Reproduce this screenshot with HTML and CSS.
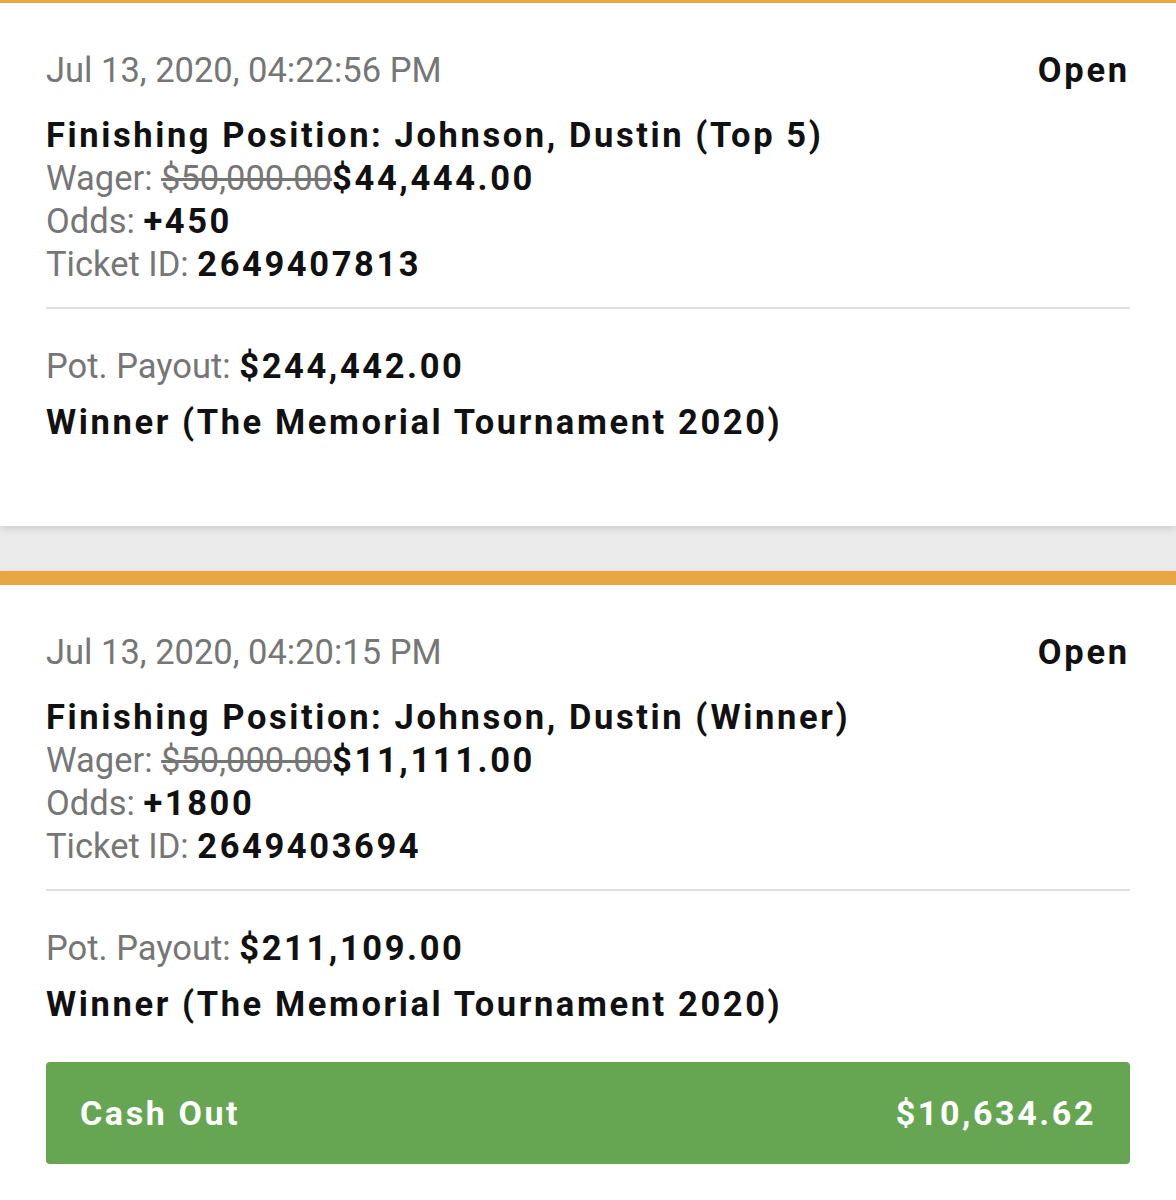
FILE: index.html
```html
<!DOCTYPE html>
<html lang="en">
<head>
    <meta charset="UTF-8">
    <meta name="viewport" content="width=device-width, initial-scale=1.0">
    <title>My Bets</title>
    <link rel="stylesheet" href="styles.css">
</head>
<body>
    <div class="feed">
        <div class="bet">
            <div class="bet-head">
                <span class="date">Jul 13, 2020, 04:22:56 PM</span>
                <span class="status">Open</span>
            </div>
            <div class="details">
                <div class="market">Finishing Position: Johnson, Dustin (Top 5)</div>
                <div class="row"><span class="label">Wager: </span><s class="old">$50,000.00</s><span class="value">$44,444.00</span></div>
                <div class="row"><span class="label">Odds: </span><span class="value">+450</span></div>
                <div class="row"><span class="label">Ticket ID: </span><span class="value">2649407813</span></div>
            </div>
            <div class="payout">
                <div class="row"><span class="label">Pot. Payout: </span><span class="value">$244,442.00</span></div>
                <div class="event">Winner (The Memorial Tournament 2020)</div>
            </div>
        </div>

        <div class="bet">
            <div class="bet-head">
                <span class="date">Jul 13, 2020, 04:20:15 PM</span>
                <span class="status">Open</span>
            </div>
            <div class="details">
                <div class="market">Finishing Position: Johnson, Dustin (Winner)</div>
                <div class="row"><span class="label">Wager: </span><s class="old">$50,000.00</s><span class="value">$11,111.00</span></div>
                <div class="row"><span class="label">Odds: </span><span class="value">+1800</span></div>
                <div class="row"><span class="label">Ticket ID: </span><span class="value">2649403694</span></div>
            </div>
            <div class="payout">
                <div class="row"><span class="label">Pot. Payout: </span><span class="value">$211,109.00</span></div>
                <div class="event">Winner (The Memorial Tournament 2020)</div>
            </div>
            <button class="cashout" type="button">
                <span>Cash Out</span>
                <span>$10,634.62</span>
            </button>
        </div>
    </div>
</body>
</html>
```

FILE: styles.css
```css
body {
    margin: 0;
    background-color: #ebebeb;
    font-family: Roboto, "Liberation Sans", sans-serif;
    font-size: 34.5px;
    line-height: 43px;
    color: #111;
}
.feed {
    margin-top: -11px;
}
.bet {
    background-color: #fff;
    border-top: 14px solid #e9a743;
    padding: 46px 46px 46px;
    margin-bottom: 45px;
    box-shadow: 0 3px 8px rgba(0, 0, 0, 0.12);
}
.bet-head {
    display: flex;
    justify-content: space-between;
    align-items: baseline;
}
.date {
    color: #767676;
}
.status {
    font-weight: 700;
    letter-spacing: 2.8px;
}
.details {
    margin-top: 22px;
    padding-bottom: 21px;
    border-bottom: 2px solid #dedede;
}
.market, .event {
    font-weight: 700;
    letter-spacing: 2.6px;
}
.label {
    color: #767676;
}
.old {
    color: #767676;
}
.value {
    font-weight: 700;
    letter-spacing: 2.6px;
}
.payout {
    margin-top: 36px;
    margin-bottom: 36px;
}
.event {
    margin-top: 13px;
}
.cashout {
    display: flex;
    justify-content: space-between;
    align-items: center;
    width: 100%;
    height: 102px;
    padding: 0 34px;
    border: none;
    border-radius: 4px;
    background-color: #66a653;
    color: #fff;
    font-family: inherit;
    font-size: 34px;
    font-weight: 700;
    letter-spacing: 2.6px;
    cursor: pointer;
}
```
